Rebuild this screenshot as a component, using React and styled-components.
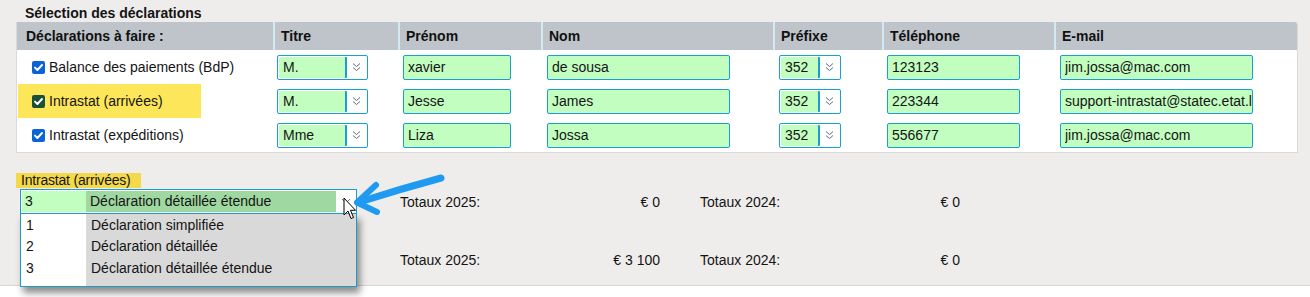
import React from "react";
import styled, { createGlobalStyle } from "styled-components";

const GlobalStyle = createGlobalStyle`
  html, body { margin: 0; padding: 0; }
  body {
    background: #ffffff;
    font-family: "Liberation Sans", Arial, sans-serif;
    color: #141414;
  }
  * { box-sizing: border-box; }
`;

const Page = styled.div`
  position: relative;
  width: 1310px;
  height: 297px;
  overflow: hidden;
`;

const Panel = styled.div`
  height: 286px;
  background: #eeedeb;
  border-bottom: 1px solid #d6d6d4;
  padding: 4px 0 0 16px;
`;

const Title = styled.div`
  font-size: 14px;
  font-weight: bold;
  line-height: 18px;
  padding-left: 9px;
`;

const Table = styled.div`
  width: 1282px;
  display: grid;
  grid-template-columns: 256px 125px 143px 232px 109px 172px 245px;
  background: #ffffff;
  border: 1px solid #dadada;
  border-top: none;
  border-top-right-radius: 3px;
  overflow: hidden;
`;

const HeadCell = styled.div`
  height: 28px;
  background: #bec4ca;
  font-size: 14px;
  font-weight: bold;
  display: flex;
  align-items: center;
  padding-left: ${(p) => (p.$first ? "9px" : "6px")};
  border-left: ${(p) => (p.$first ? "none" : "2px solid #d4eaf2")};
  color: #111;
`;

const Cell = styled.div`
  height: 34px;
  display: flex;
  align-items: center;
  padding-left: ${(p) => p.$pad ?? 5}px;
`;

const DeclLabel = styled.label`
  display: flex;
  align-items: center;
  gap: 4px;
  min-width: 183px;
  white-space: nowrap;
  height: 34px;
  padding-left: 14px;
  margin-left: 1px;
  font-size: 14px;
  background: ${(p) => (p.$highlight ? "#fde659" : "transparent")};
`;

const Check = styled.span`
  width: 13px;
  height: 13px;
  border-radius: 2px;
  background: ${(p) => (p.$highlight ? "#1a4f38" : "#0b63d6")};
  display: inline-flex;
  align-items: center;
  justify-content: center;
  flex: none;
`;

const Field = styled.input`
  width: ${(p) => p.$w}px;
  height: 25px;
  border: 1px solid #17a0d0;
  border-radius: 2px;
  background: #c2fec0;
  font-family: "Liberation Sans", Arial, sans-serif;
  font-size: 14px;
  color: #141414;
  padding: 0 0 0 4px;
  outline: none;
  margin: 0;
`;

const Select = styled.div`
  width: ${(p) => p.$w}px;
  height: 25px;
  border: 1px solid #17a0d0;
  border-radius: 2px;
  background: #ffffff;
  display: flex;
  padding: 1px;
`;

const SelectValue = styled.div`
  flex: 1;
  background: #c2fec0;
  border-right: 2px solid #17a0d0;
  font-size: 14px;
  line-height: 20px;
  padding-left: 4px;
  border-radius: 1px;
`;

const SelectIcon = styled.div`
  width: ${(p) => p.$w || 19}px;
  display: flex;
  align-items: center;
  justify-content: center;
`;

const Bottom = styled.div`
  display: flex;
  margin-top: 20px;
`;

const LeftCol = styled.div`
  width: 384px;
  display: flex;
  flex-direction: column;
  align-items: flex-start;
`;

const SectionLabel = styled.div`
  background: #f4d94b;
  font-size: 14px;
  line-height: 15px;
  height: 15px;
  padding: 0 10px 0 5px;
  letter-spacing: -0.2px;
`;

const Combo = styled.div`
  position: relative;
  margin: 1px 0 0 4px;
  width: 337px;
  height: 25px;
  border: 1px solid #1a9dcb;
  background: #ffffff;
  display: flex;
  padding: 1px 0 1px 1px;
`;

const ComboCode = styled.div`
  width: ${(p) => p.$w}px;
  background: ${(p) => p.$bg};
  font-size: 14px;
  line-height: 21px;
  padding-left: ${(p) => p.$pad}px;
`;

const DropList = styled.div`
  position: absolute;
  left: -1px;
  top: 23px;
  width: 337px;
  border: 1px solid #1a9dcb;
  background: linear-gradient(90deg, #ffffff 0 65px, #d9d9d9 65px);
  padding: 0 0 7px 1px;
  box-shadow: 3px 6px 7px rgba(0, 0, 0, 0.45);
  z-index: 2;
`;

const DropItem = styled.div`
  display: grid;
  grid-template-columns: 65px 1fr;
  height: 21.5px;
  align-items: center;
  font-size: 14px;
  & > span { padding-left: 4px; }
`;

const Totals = styled.div`
  margin-top: 16px;
  display: grid;
  grid-template-columns: 260px 260px;
  column-gap: 40px;
  row-gap: 33px;
  grid-auto-rows: 25px;
`;

const TotalPair = styled.div`
  display: flex;
  justify-content: space-between;
  align-items: center;
  font-size: 14px;
`;

const Overlay = styled.svg`
  position: absolute;
  left: ${(p) => p.$x}px;
  top: ${(p) => p.$y}px;
  pointer-events: none;
  z-index: 5;
  overflow: visible;
`;

const CheckMark = () => (
  <svg width="11" height="11" viewBox="0 0 11 11">
    <polyline points="2,5.6 4.4,8 9,3" fill="none" stroke="#fff" strokeWidth="1.9" strokeLinecap="round" strokeLinejoin="round" />
  </svg>
);

const DoubleChevron = () => (
  <svg width="9" height="10" viewBox="0 0 9 10">
    <polyline points="1,1.5 4.5,4.5 8,1.5" fill="none" stroke="#5a6e86" strokeWidth="1" />
    <polyline points="1,5.5 4.5,8.5 8,5.5" fill="none" stroke="#5a6e86" strokeWidth="1" />
  </svg>
);

const SingleChevron = () => (
  <svg width="10" height="7" viewBox="0 0 10 7">
    <polyline points="1,1 5,5 9,1" fill="none" stroke="#6a7a8c" strokeWidth="1" />
  </svg>
);

const rows = [
  { label: "Balance des paiements (BdP)", titre: "M.", prenom: "xavier", nom: "de sousa", prefixe: "352", tel: "123123", mail: "jim.jossa@mac.com" },
  { label: "Intrastat (arrivées)", titre: "M.", prenom: "Jesse", nom: "James", prefixe: "352", tel: "223344", mail: "support-intrastat@statec.etat.lu", highlight: true },
  { label: "Intrastat (expéditions)", titre: "Mme", prenom: "Liza", nom: "Jossa", prefixe: "352", tel: "556677", mail: "jim.jossa@mac.com" },
];

const headers = ["Déclarations à faire :", "Titre", "Prénom", "Nom", "Préfixe", "Téléphone", "E-mail"];

const options = [
  ["1", "Déclaration simplifiée"],
  ["2", "Déclaration détaillée"],
  ["3", "Déclaration détaillée étendue"],
];

export default function App() {
  return (
    <Page>
      <GlobalStyle />
      <Panel>
        <Title>Sélection des déclarations</Title>
        <Table>
          {headers.map((h, i) => (
            <HeadCell key={h} $first={i === 0}>{h}</HeadCell>
          ))}
          {rows.map((r) => (
            <React.Fragment key={r.label}>
              <Cell $pad={0}>
                <DeclLabel $highlight={r.highlight}>
                  <Check $highlight={r.highlight}><CheckMark /></Check>
                  {r.label}
                </DeclLabel>
              </Cell>
              <Cell $pad={4}>
                <Select $w={91}>
                  <SelectValue>{r.titre}</SelectValue>
                  <SelectIcon><DoubleChevron /></SelectIcon>
                </Select>
              </Cell>
              <Cell><Field $w={108} readOnly defaultValue={r.prenom} /></Cell>
              <Cell $pad={6}><Field $w={183} readOnly defaultValue={r.nom} /></Cell>
              <Cell $pad={6}>
                <Select $w={62}>
                  <SelectValue>{r.prefixe}</SelectValue>
                  <SelectIcon><DoubleChevron /></SelectIcon>
                </Select>
              </Cell>
              <Cell><Field $w={133} readOnly defaultValue={r.tel} /></Cell>
              <Cell $pad={6}><Field $w={193} readOnly defaultValue={r.mail} /></Cell>
            </React.Fragment>
          ))}
        </Table>

        <Bottom>
          <LeftCol>
            <SectionLabel>Intrastat (arrivées)</SectionLabel>
            <Combo>
              <ComboCode $w={64} $bg="#c2fec0" $pad={3}>3</ComboCode>
              <ComboCode $w={250} $bg="#9fd8a0" $pad={4}>Déclaration détaillée étendue</ComboCode>
              <SelectIcon $w={20}><SingleChevron /></SelectIcon>
              <DropList>
                {options.map(([c, d]) => (
                  <DropItem key={c}>
                    <span>{c}</span>
                    <span>{d}</span>
                  </DropItem>
                ))}
              </DropList>
            </Combo>
          </LeftCol>
          <Totals>
            <TotalPair><span>Totaux 2025:</span><span>€ 0</span></TotalPair>
            <TotalPair><span>Totaux 2024:</span><span>€ 0</span></TotalPair>
            <TotalPair><span>Totaux 2025:</span><span>€ 3 100</span></TotalPair>
            <TotalPair><span>Totaux 2024:</span><span>€ 0</span></TotalPair>
          </Totals>
        </Bottom>
      </Panel>

      <Overlay $x={340} $y={168} width="110" height="52" viewBox="340 168 110 52">
        <path d="M441,178 Q400,189 358,202.5" fill="none" stroke="#1e9bf0" strokeWidth="7" strokeLinecap="round" />
        <path d="M376,185 L357,202.5 L377,212" fill="none" stroke="#1e9bf0" strokeWidth="6" strokeLinecap="round" strokeLinejoin="round" />
      </Overlay>

      <Overlay $x={343} $y={197} width="14" height="24" viewBox="0 0 14 24">
        <path d="M1,1 L1,18 L5,14 L8,21.5 L10.5,20.5 L7.5,13.3 L12.5,13.3 Z" fill="#ffffff" stroke="#000000" strokeWidth="1" strokeLinejoin="round" />
      </Overlay>
    </Page>
  );
}
